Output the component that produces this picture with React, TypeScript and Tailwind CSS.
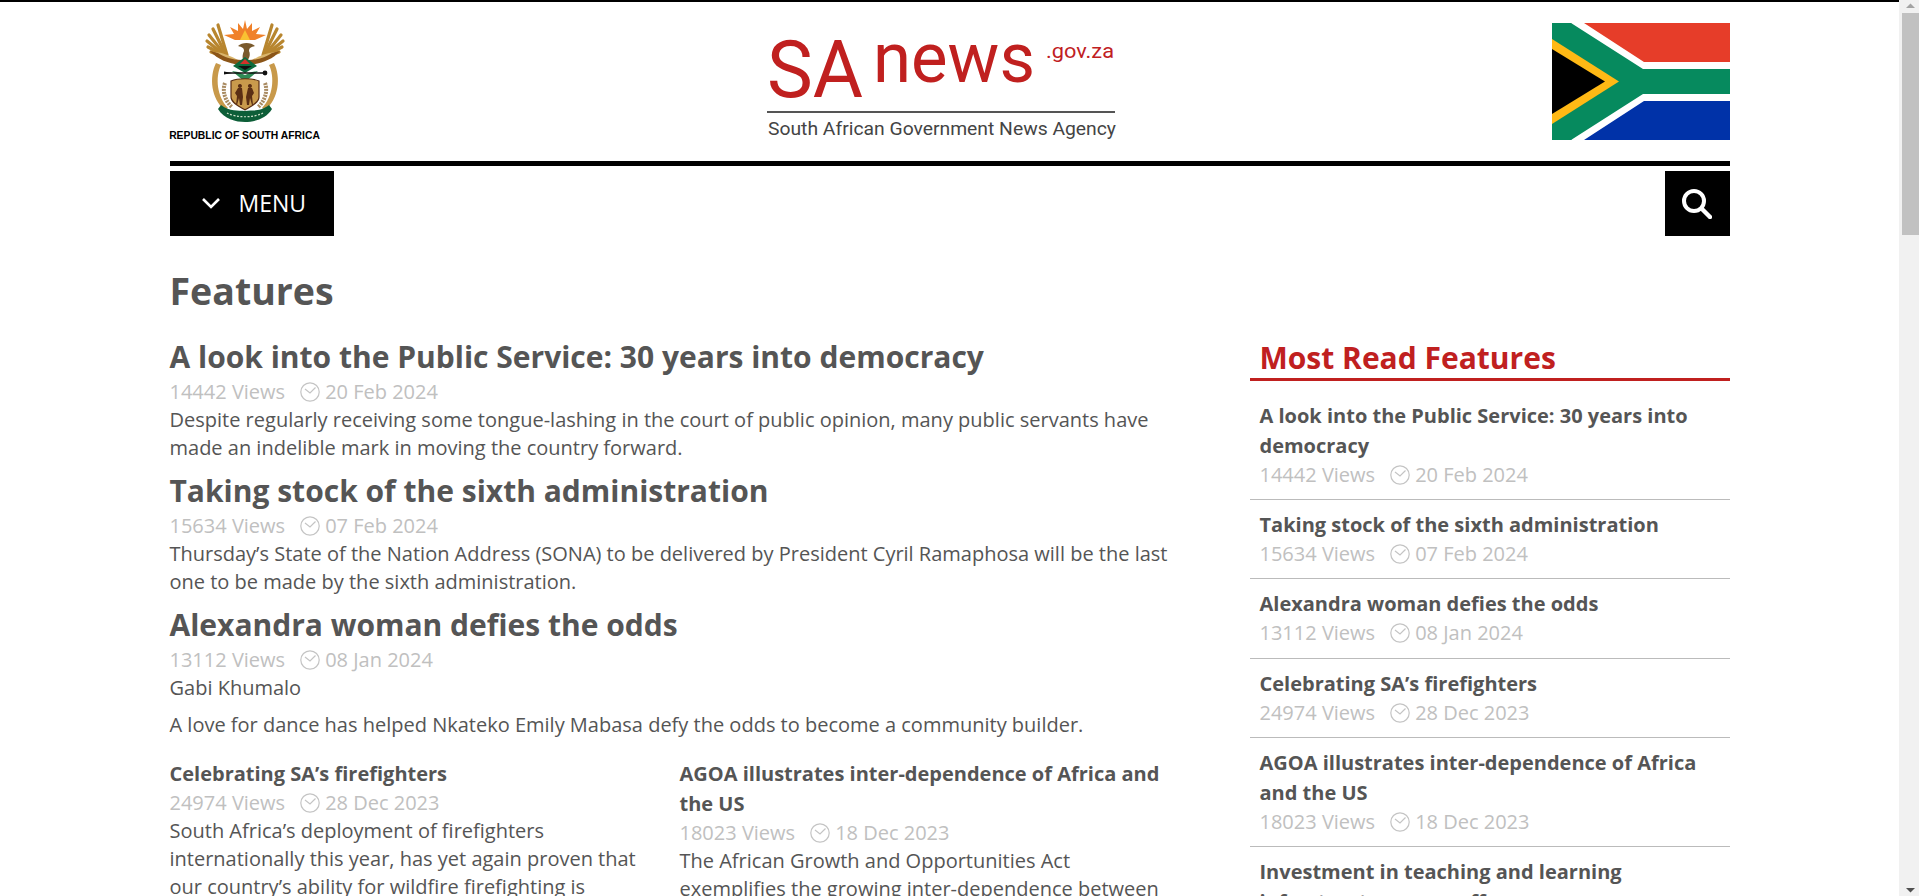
interface Meta {
  views: number;
  date: string;
}

interface Item extends Meta {
  title: string;
}

const mostRead: Item[] = [
  { title: "A look into the Public Service: 30 years into democracy", views: 14442, date: "20 Feb 2024" },
  { title: "Taking stock of the sixth administration", views: 15634, date: "07 Feb 2024" },
  { title: "Alexandra woman defies the odds", views: 13112, date: "08 Jan 2024" },
  { title: "Celebrating SA’s firefighters", views: 24974, date: "28 Dec 2023" },
  { title: "AGOA illustrates inter-dependence of Africa and the US", views: 18023, date: "18 Dec 2023" },
  { title: "Investment in teaching and learning infrastructure pays off", views: 11208, date: "12 Dec 2023" },
];

function Clock() {
  return (
    <svg viewBox="0 0 20 20" className="w-5 h-5 ml-[15px] mr-[5px] shrink-0" fill="none" stroke="#c4c4c4" strokeWidth="1.2">
      <circle cx="10" cy="10" r="9.2" />
      <path d="M5 7 10 11 15.500 5.500" />
    </svg>
  );
}

function MetaRow({ views, date }: Meta) {
  return (
    <div className="flex items-center h-[28px] text-[20px] text-[#c0c0c0]">
      <span>{views} Views</span>
      <Clock />
      <span>{date}</span>
    </div>
  );
}

function Arms() {
  const half = (
    <g>
      {/* wing feathers */}
      <g stroke="#b8862f" strokeWidth="3.2" strokeLinecap="round" fill="none">
        <path d="M27 40 18 10" />
        <path d="M26 40 13 14" />
        <path d="M25 40 9 20" />
        <path d="M24 40 7 26" />
        <path d="M23 40 8 32" />
        <path d="M22 41 11 37" />
      </g>
      <path d="M15 37 C24 38 31 41 38 45 L36 48 C28 46 20 43 15 37Z" fill="#d9b56c" />
      <path d="M10 36 C18 45 28 48 40 50 L42 45 C32 45 24 42 18 38Z" fill="#8b5518" />
      {/* tusk */}
      <path d="M16 48 C9 62 11 84 25 95 L28 93 C17 82 15 62 21 50Z" fill="#c8994a" />
      {/* wheat */}
      <path d="M25 68 C22 76 25 86 32 92" stroke="#a98b62" strokeWidth="4" strokeDasharray="2 1" fill="none" />
    </g>
  );
  return (
    <svg viewBox="0 0 90 110" className="w-[90px] h-[110px]">
      {half}
      <g transform="matrix(-1 0 0 1 90 0)">{half}</g>
      {/* sun */}
      <path d="M45 5 47 14 52 8 52 16 60 12 56 19 66 20 55 25 35 25 24 20 34 19 30 12 38 16 38 8 43 14Z" fill="#f0812a" />
      <path d="M45 15 50 25H40Z" fill="#f9c232" />
      {/* bird */}
      <path d="M38 31C42 27 51 27 55 31 51 32 49 33 49 36 51 40 49 45 45 47 42 45 42 40 44 36 44 33 42 32 38 31Z" fill="#7a5a2c" />
      {/* diamond and protea */}
      <path d="M45 42 57 51 45 58 33 51Z" fill="#0d6b3e" />
      <path d="M45 44 50 49H40Z" fill="#d4312a" />
      <path d="M38 51H52L45 55Z" fill="#111" />
      <path d="M32 56 45 67 58 56 52 57 45 60 38 57Z" fill="#2f8a55" />
      {/* spears */}
      <path d="M24 58 H64" stroke="#111" strokeWidth="1.4" />
      <circle cx="65" cy="58" r="2.4" fill="#111" />
      <path d="M24 56.5 32 58 24 59.5Z" fill="#111" />
      {/* shield */}
      <path d="M31 66C38 63 52 63 59 66V82C59 88 50 92 45 95 40 92 31 88 31 82Z" fill="#c99a4c" stroke="#5a2e14" strokeWidth="1.2" />
      <path d="M40 69a2 2 0 1 1 -.1 0M38 73h4l1 9-1 8h-2l-1-7-2 7h-1l1-9-2-3ZM50 69a2 2 0 1 1 -.1 0M48 73h4l2 5-2 3 1 9h-1l-2-7-1 7h-2l-1-8Z" fill="#5a2e14" />
      {/* ribbon */}
      <path d="M21 90C30 97 38 95 45 96 52 95 60 97 69 90L72 94C66 104 54 107 45 107 36 107 24 104 18 94Z" fill="#0d5e38" />
      <path d="M27 98C36 103 54 103 63 98" stroke="#cfe0c9" strokeWidth="1.2" strokeDasharray="2 1.5" fill="none" />
    </svg>
  );
}

function Flag() {
  return (
    <svg viewBox="0 0 178 117" className="w-[178px] h-[117px]">
      <rect width="178" height="39" fill="#e63d29" />
      <rect y="78" width="178" height="39" fill="#0032a8" />
      <rect y="39" width="178" height="39" fill="#fff" />
      <path d="M20 0H32L92 39H178V78H92L32 117H20L0 104V13Z" fill="#fff" />
      <path d="M0 0H19L91 46H178V71H91L19 117H0Z" fill="#068a5e" />
      <path d="M0 16 67 58.5 0 101Z" fill="#ffb915" />
      <path d="M0 26 53 58.5 0 91Z" fill="#000" />
    </svg>
  );
}

// the agency logo, kept as svg text so it stays real text
function Logo() {
  return (
    <svg viewBox="0 -15 350 127" className="w-[350px] h-[127px] ml-[12px] mt-[13px] font-['Roboto',sans-serif]">
      <text x="0" y="67" fontSize="80" fill="#c0201f" textLength="96" lengthAdjust="spacingAndGlyphs">SA</text>
      <text x="106" y="52" fontSize="70" fill="#c0201f" textLength="162" lengthAdjust="spacingAndGlyphs">news</text>
      <text x="279" y="28" fontSize="20" fill="#c0201f" textLength="68" lengthAdjust="spacingAndGlyphs">.gov.za</text>
      <rect x="0" y="81" width="348" height="2" fill="#555" />
      <text x="1" y="105" fontSize="19" fill="#444" textLength="348" lengthAdjust="spacingAndGlyphs">South African Government News Agency</text>
    </svg>
  );
}

function Article({ title, views, date, children }: Item & { children: React.ReactNode }) {
  return (
    <article className="mb-[8px]">
      <h2 className="text-[30px] leading-[42px] font-bold">{title}</h2>
      <MetaRow views={views} date={date} />
      {children}
    </article>
  );
}

function Teaser({ title, views, date, children }: Item & { children: React.ReactNode }) {
  return (
    <div>
      <h3 className="text-[20px] leading-[30px] font-bold">{title}</h3>
      <MetaRow views={views} date={date} />
      <p>{children}</p>
    </div>
  );
}

export default function App() {
  return (
    <div className="flex h-[896px] overflow-hidden bg-white font-['Open_Sans',sans-serif] text-[#555] text-[20px] leading-[28px]">
      <div className="flex-1 min-w-0 border-t-2 border-black">
        <div className="w-[1560px] mx-auto">
          <header className="flex items-start justify-between h-[164px] border-b-[5px] border-black">
            <div className="w-[150px] pt-[13px] flex flex-col items-center">
              <Arms />
              <div className="mt-[4px] whitespace-nowrap font-['Liberation_Sans',sans-serif] font-bold text-[10.35px] leading-[14px] text-black">
                REPUBLIC OF SOUTH AFRICA
              </div>
            </div>
            <Logo />
            <div className="pt-[21px]">
              <Flag />
            </div>
          </header>

          <nav className="flex justify-between mt-[5px]">
            <button className="flex items-center w-[164px] h-[65px] bg-black text-white text-[23px] pl-[31px] pb-[2px]">
              <svg viewBox="0 0 20 13" className="w-5 h-[13px] mr-[18px] mt-[2px]" fill="none" stroke="#fff" strokeWidth="2.6">
                <path d="M2 2l8 8 8-8" />
              </svg>
              MENU
            </button>
            <button className="flex items-center justify-center w-[65px] h-[65px] bg-black text-white">
              <svg viewBox="0 0 30 30" className="w-[30px] h-[30px]" fill="none" stroke="#fff" strokeWidth="4">
                <circle cx="12" cy="12" r="10" />
                <path d="M20 20l8 8" strokeWidth="4.500" strokeLinecap="round" />
              </svg>
            </button>
          </nav>

          <h1 className="text-[37.5px] leading-[50px] font-bold mt-[30px]">Features</h1>

          <div className="flex justify-between mt-[20px]">
            <main className="w-[1000px]">
              <Article title="A look into the Public Service: 30 years into democracy" views={14442} date="20 Feb 2024">
                <p>Despite regularly receiving some tongue-lashing in the court of public opinion, many public servants have made an indelible mark in moving the country forward.</p>
              </Article>
              <Article title="Taking stock of the sixth administration" views={15634} date="07 Feb 2024">
                <p>Thursday’s State of the Nation Address (SONA) to be delivered by President Cyril Ramaphosa will be the last one to be made by the sixth administration.</p>
              </Article>
              <Article title="Alexandra woman defies the odds" views={13112} date="08 Jan 2024">
                <p className="mb-[9px]">Gabi Khumalo</p>
                <p>A love for dance has helped Nkateko Emily Mabasa defy the odds to become a community builder.</p>
              </Article>
              <div className="grid grid-cols-2 gap-x-[20px] mt-[20px]">
                <Teaser title="Celebrating SA’s firefighters" views={24974} date="28 Dec 2023">
                  South Africa’s deployment of firefighters internationally this year, has yet again proven that our country’s ability for wildfire firefighting is internationally recognised.
                </Teaser>
                <Teaser title="AGOA illustrates inter-dependence of Africa and the US" views={18023} date="18 Dec 2023">
                  The African Growth and Opportunities Act exemplifies the growing inter-dependence between Africa and the US.
                </Teaser>
              </div>
            </main>

            <aside className="w-[480px]">
              <h2 className="text-[30px] leading-[40px] font-bold text-[#c0201f] border-b-[3px] border-[#c0201f] pl-[10px] pt-[2px]">
                Most Read Features
              </h2>
              <ul className="mt-[10px]">
                {mostRead.map((item) => (
                  <li key={item.title} className="border-b border-[#bbb] px-[10px] pt-[10px] pb-[10.2px]">
                    <div className="text-[20px] leading-[30px] font-bold">{item.title}</div>
                    <MetaRow views={item.views} date={item.date} />
                  </li>
                ))}
              </ul>
            </aside>
          </div>
        </div>
      </div>

      {/* scrollbar */}
      <div className="w-[20px] shrink-0 bg-[#f1f1f1] flex flex-col items-end">
        <svg viewBox="0 0 17 13" className="w-[17px] h-[13px]">
          <path d="M4 8 8.5 3.500 13 8Z" fill="#a3a3a3" />
        </svg>
        <div className="w-[17px] h-[222px] bg-[#c1c1c1]" />
        <svg viewBox="0 0 17 13" className="w-[17px] h-[13px] mt-auto">
          <path d="M4 5 8.500 9.500 13 5Z" fill="#505050" />
        </svg>
      </div>
    </div>
  );
}
